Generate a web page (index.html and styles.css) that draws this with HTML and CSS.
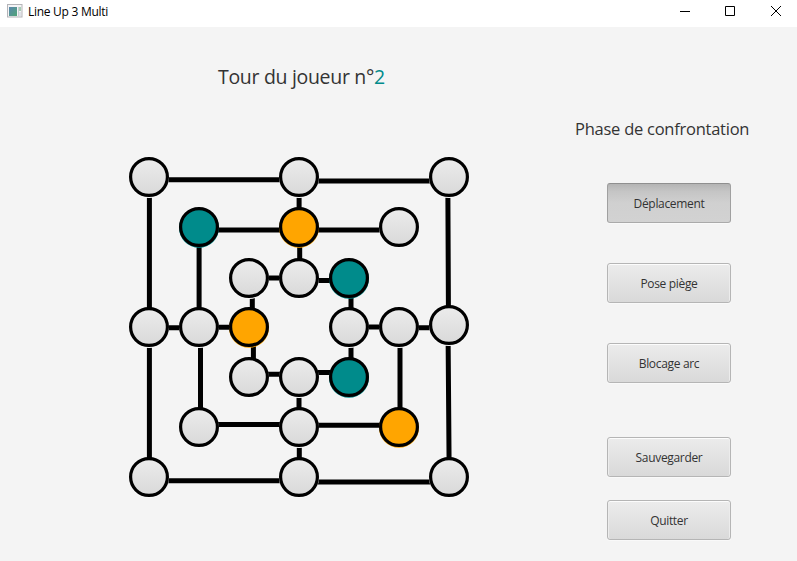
FILE: index.html
```
<!DOCTYPE html>
<html lang="fr">
<head>
<meta charset="utf-8">
<title>Line Up 3 Multi</title>
<link rel="stylesheet" href="styles.css">
</head>
<body>
<header class="titlebar">
  <svg class="app-icon" width="16" height="14" viewBox="0 0 16 14">
    <defs><linearGradient id="screen" x1="0" y1="0" x2="1" y2="1"><stop offset="0" stop-color="#5b86ae"/><stop offset="1" stop-color="#4fa577"/></linearGradient></defs>
    <rect x=".5" y=".5" width="14.5" height="12.5" fill="#f4f4f6" stroke="#b4b4b8"/>
    <rect x="2" y="3" width="8" height="9" fill="url(#screen)"/>
    <rect x="11" y="3" width="1" height="9" fill="#c9ccd3"/>
    <rect x="12" y="3" width="2" height="4" fill="#a5cfb4"/>
    <rect x="12" y="8" width="2" height="4" fill="#dfe2e8"/>
  </svg>
  <span class="window-title">Line Up 3 Multi</span>
  <div class="controls">
    <svg width="46" height="27" viewBox="0 0 46 27"><path d="M20 11.500h10"/></svg>
    <svg width="46" height="27" viewBox="0 0 46 27"><path d="M19.500 6.500h9v9h-9z"/></svg>
    <svg width="46" height="27" viewBox="0 0 46 27"><path d="M19 6l10 10M29 6l-10 10"/></svg>
  </div>
</header>
<main class="game">
  <section class="play">
    <h1 class="turn">Tour du joueur n°<span class="player">2</span></h1>
    <svg class="board" width="342" height="342" viewBox="128 156 342 342">
      <defs>
        <linearGradient id="empty" x1="0" y1="0" x2="0" y2="1"><stop offset="0" stop-color="#ececec"/><stop offset="1" stop-color="#d9d9d9"/></linearGradient>
        <g id="node"><circle class="glow" r="20"/><circle class="ring" r="18.400"/></g>
      </defs>
      <g class="arcs">
        <path d="M149 179.700H299M299 180.900H449M199 230H399M249 277.900H299M299 280.500H349"/>
        <path d="M149 327.700H199M199 327.200H249M349 326.900H399M399 327.700H449"/>
        <path d="M249 374.200H299M299 372.600H349M199 424.500H299M299 425.300H399M149 480.700H299M299 481.900H449"/>
        <path d="M149.400 177V477M199.100 227V327M200.500 327V427M252.300 278V327M253.400 327V377"/>
        <path d="M299.100 177V227M299.700 227V278M299 377V427M299.300 427V477"/>
        <path d="M351 278V377M400 327V427M447.800 177L448.500 325M448 325L449.200 477"/>
      </g>
      <g class="empty">
        <use href="#node" x="149" y="177"/><use href="#node" x="299" y="177"/><use href="#node" x="449" y="177"/>
        <use href="#node" x="399" y="227"/>
        <use href="#node" x="249" y="278"/><use href="#node" x="299" y="278"/>
        <use href="#node" x="149" y="327"/><use href="#node" x="199" y="327"/><use href="#node" x="349" y="327"/><use href="#node" x="399" y="327"/><use href="#node" x="449" y="325"/>
        <use href="#node" x="249" y="377"/><use href="#node" x="299" y="377"/>
        <use href="#node" x="199" y="427"/><use href="#node" x="299" y="427"/>
        <use href="#node" x="149" y="477"/><use href="#node" x="299" y="477"/><use href="#node" x="449" y="477"/>
      </g>
      <g class="teal"><use href="#node" x="199" y="227"/><use href="#node" x="349" y="278"/><use href="#node" x="349" y="377"/></g>
      <g class="orange"><use href="#node" x="299" y="227"/><use href="#node" x="249" y="327"/><use href="#node" x="399" y="427"/></g>
    </svg>
  </section>
  <aside class="side">
    <h2 class="phase">Phase de confrontation</h2>
    <div class="actions">
      <button class="btn pressed">Déplacement</button>
      <button class="btn">Pose piège</button>
      <button class="btn">Blocage arc</button>
    </div>
    <div class="session">
      <button class="btn">Sauvegarder</button>
      <button class="btn">Quitter</button>
    </div>
  </aside>
</main>
</body>
</html>
```
FILE: styles.css
```
* { box-sizing: border-box; }
body {
  margin: 0;
  width: 797px;
  height: 561px;
  overflow: hidden;
  background: #f4f4f4;
  color: #333;
  font-family: "Open Sans", "Noto Sans", sans-serif;
}
.titlebar {
  display: flex;
  height: 27px;
  padding-left: 7px;
  background: #fff;
  color: #000;
}
.app-icon { margin-top: 4px; }
.window-title {
  margin-left: 5px;
  font-size: 12px;
  line-height: 24px;
  letter-spacing: -0.28px;
}
.controls { display: flex; margin-left: auto; margin-right: -1px; }
.controls path { fill: none; stroke: #000; stroke-width: 1; }
.game { display: flex; height: 534px; }
.play { width: 575px; }
.turn {
  margin: 35px 0 0 218px;
  height: 30px;
  font-size: 19.5px;
  font-weight: 400;
  line-height: 30px;
  letter-spacing: -0.31px;
  white-space: nowrap;
}
.player { color: #008b8b; }
.board { display: block; margin: 64px 0 0 128px; }
.arcs path { fill: none; stroke: #000; stroke-width: 5; }
.empty { fill: url(#empty); --edge: #f8f8f8; --drop: 1px; }
.teal { fill: #008b8b; --edge: #008b8b; --drop: 0.8px; }
.orange { fill: #ffa500; --edge: #ffa500; --drop: 0.8px; }
.glow { fill: var(--edge); cy: var(--drop); }
.ring { stroke: #000; stroke-width: 3.2; }
.side { width: 222px; }
.phase {
  margin: 87px 0 0;
  height: 30px;
  font-size: 16.5px;
  font-weight: 400;
  line-height: 30px;
  letter-spacing: -0.25px;
  white-space: nowrap;
}
.actions, .session {
  display: flex;
  flex-direction: column;
  margin-left: 32px;
  gap: 40px;
}
.actions { margin-top: 39px; }
.session { margin-top: 54px; gap: 23px; }
.btn {
  width: 124px;
  height: 40px;
  padding: 1px 0 0;
  border: 1px solid #b5b5b5;
  border-radius: 3px;
  background: linear-gradient(#ececec, #d9d9d9);
  box-shadow: inset 0 1px #fcfcfc, inset 1px 0 #ececec, inset -1px 0 #ececec, 0 1px #f9f9f9;
  color: #333;
  font: 12px "Open Sans", "Noto Sans", sans-serif;
  letter-spacing: -0.33px;
}
.pressed {
  border-color: #8f8f8f #a0a0a0 #aaa;
  background: linear-gradient(#b4b4b4, #c5c5c5 20%, #d0d0d0 50%, #d2d2d2);
  box-shadow: 0 1px #f9f9f9;
}
```
